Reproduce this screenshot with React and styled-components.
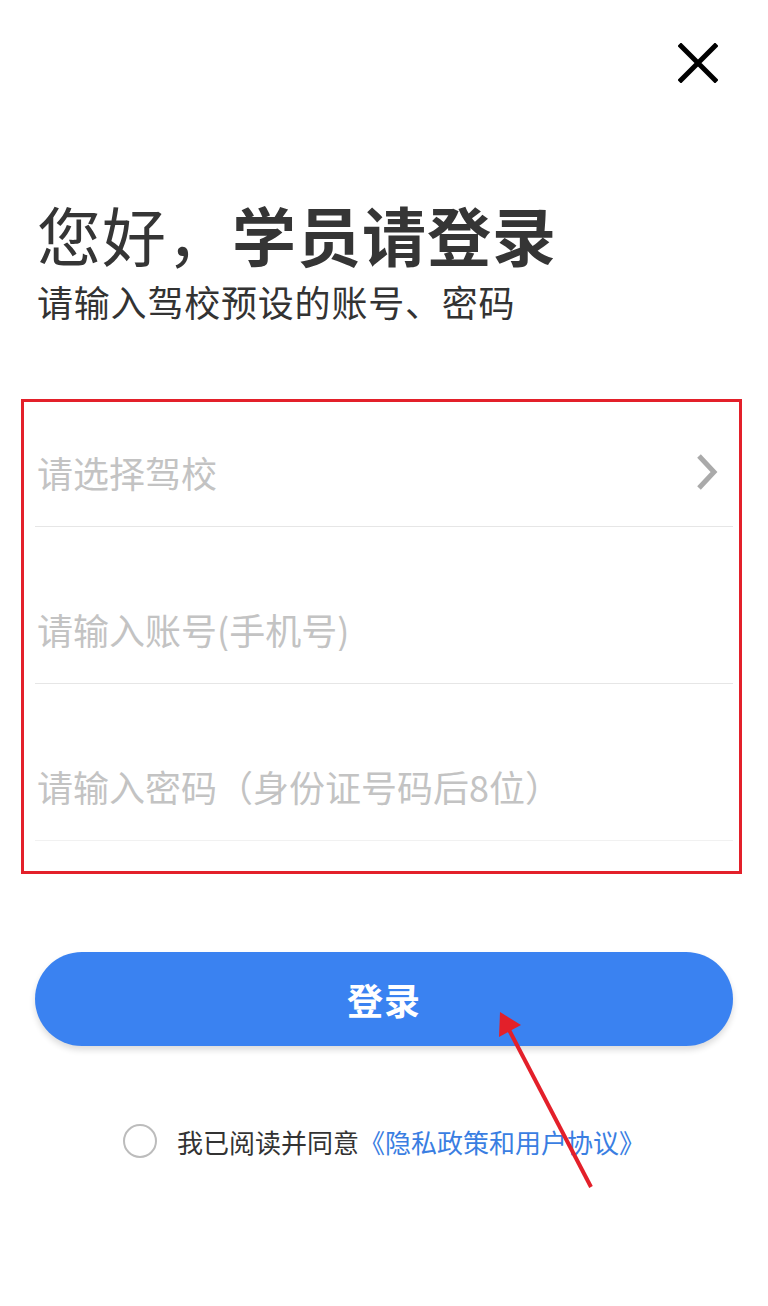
import React from 'react';
import styled, { createGlobalStyle } from 'styled-components';

const GlobalStyle = createGlobalStyle`
  html, body {
    margin: 0;
    padding: 0;
    background: #ffffff;
  }
  body {
    font-family: "Noto Sans CJK SC", "Noto Sans", sans-serif;
  }
  * {
    box-sizing: border-box;
  }
`;

// 页面容器
const Page = styled.div`
  position: relative;
  width: 768px;
  min-height: 1306px;
  background: #ffffff;
  display: flex;
  flex-direction: column;
  padding: 0 35px;
`;

const TopBar = styled.div`
  display: flex;
  justify-content: flex-end;
  padding-top: 43px;
  padding-right: 15px;
`;

const CloseButton = styled.button`
  width: 40px;
  height: 40px;
  padding: 0;
  border: none;
  background: transparent;
  cursor: pointer;
`;

const Title = styled.h1`
  margin: 117px 0 0 2px;
  font-size: 64px;
  line-height: 66px;
  font-weight: 400;
  color: #353535;
  letter-spacing: 1px;
`;

const Strong = styled.span`
  font-weight: 700;
`;

const SubTitle = styled.p`
  margin: 15px 0 0 2px;
  font-size: 36px;
  line-height: 40px;
  color: #333333;
  letter-spacing: 0.8px;
`;

const Form = styled.div`
  margin-top: 49px;
  display: flex;
  flex-direction: column;
`;

const Row = styled.div`
  height: 157px;
  display: flex;
  align-items: flex-end;
  justify-content: space-between;
  padding: 0 15px 32px 2px;
  border-bottom: 1px solid ${(p) => (p.$light ? '#f1f1f1' : '#e6e6e6')};
`;

const Placeholder = styled.span`
  font-size: 36px;
  line-height: 44px;
  color: #c3c3c3;
`;

const Field = styled.input`
  width: 100%;
  border: none;
  outline: none;
  padding: 0;
  background: transparent;
  font-family: inherit;
  font-size: 36px;
  line-height: 44px;
  height: 44px;
  color: #333;

  &::placeholder {
    color: #c3c3c3;
  }
`;

const LoginButton = styled.button`
  margin-top: 111px;
  height: 94px;
  width: 100%;
  border: none;
  border-radius: 47px;
  background: #3a82f1;
  color: #ffffff;
  font-family: inherit;
  font-size: 36px;
  font-weight: 700;
  letter-spacing: 1px;
  box-shadow: 0 4px 6px rgba(0, 0, 0, 0.14);
  cursor: pointer;
`;

const Agreement = styled.div`
  margin-top: 75px;
  height: 40px;
  display: flex;
  align-items: center;
  justify-content: center;
  font-size: 26px;
  color: #333333;
`;

const Circle = styled.span`
  width: 34px;
  height: 34px;
  border-radius: 50%;
  border: 2px solid #bcbcbc;
  margin-right: 20px;
`;

const Link = styled.span`
  color: #3a7ee2;
`;

// 截图上的红色标注
const MarkBox = styled.div`
  position: absolute;
  left: 21px;
  top: 399px;
  width: 721px;
  height: 475px;
  border: 3px solid #e3202a;
  pointer-events: none;
`;

const MarkArrow = styled.svg`
  position: absolute;
  left: 0;
  top: 0;
  pointer-events: none;
`;

const App = () => {
  return (
    <>
      <GlobalStyle />
      <Page>
        <TopBar>
          <CloseButton aria-label="关闭">
            <svg width="40" height="40" viewBox="0 0 40 40">
              <path d="M3 3 L37 37 M37 3 L3 37" stroke="#000" strokeWidth="5" strokeLinecap="square" />
            </svg>
          </CloseButton>
        </TopBar>

        <Title>
          您好，<Strong>学员请登录</Strong>
        </Title>
        <SubTitle>请输入驾校预设的账号、密码</SubTitle>

        <Form>
          <Row>
            <Placeholder>请选择驾校</Placeholder>
            <svg width="22" height="36" viewBox="0 0 22 36" style={{ marginBottom: 4 }}>
              <path d="M3 2 L18 18 L3 34" fill="none" stroke="#aaaaaa" strokeWidth="5" />
            </svg>
          </Row>
          <Row>
            <Field placeholder="请输入账号(手机号)" />
          </Row>
          <Row $light>
            <Field type="password" placeholder="请输入密码（身份证号码后8位）" />
          </Row>
        </Form>

        <LoginButton>登录</LoginButton>

        <Agreement>
          <Circle />
          我已阅读并同意<Link>《隐私政策和用户协议》</Link>
        </Agreement>

        <MarkBox />
        <MarkArrow width="768" height="1306" viewBox="0 0 768 1306">
          <line x1="591" y1="1187" x2="507" y2="1026" stroke="#e3202a" strokeWidth="4" />
          <polygon points="500,1012 499,1037 521,1025" fill="#e3202a" />
        </MarkArrow>
      </Page>
    </>
  );
};

export default App;
